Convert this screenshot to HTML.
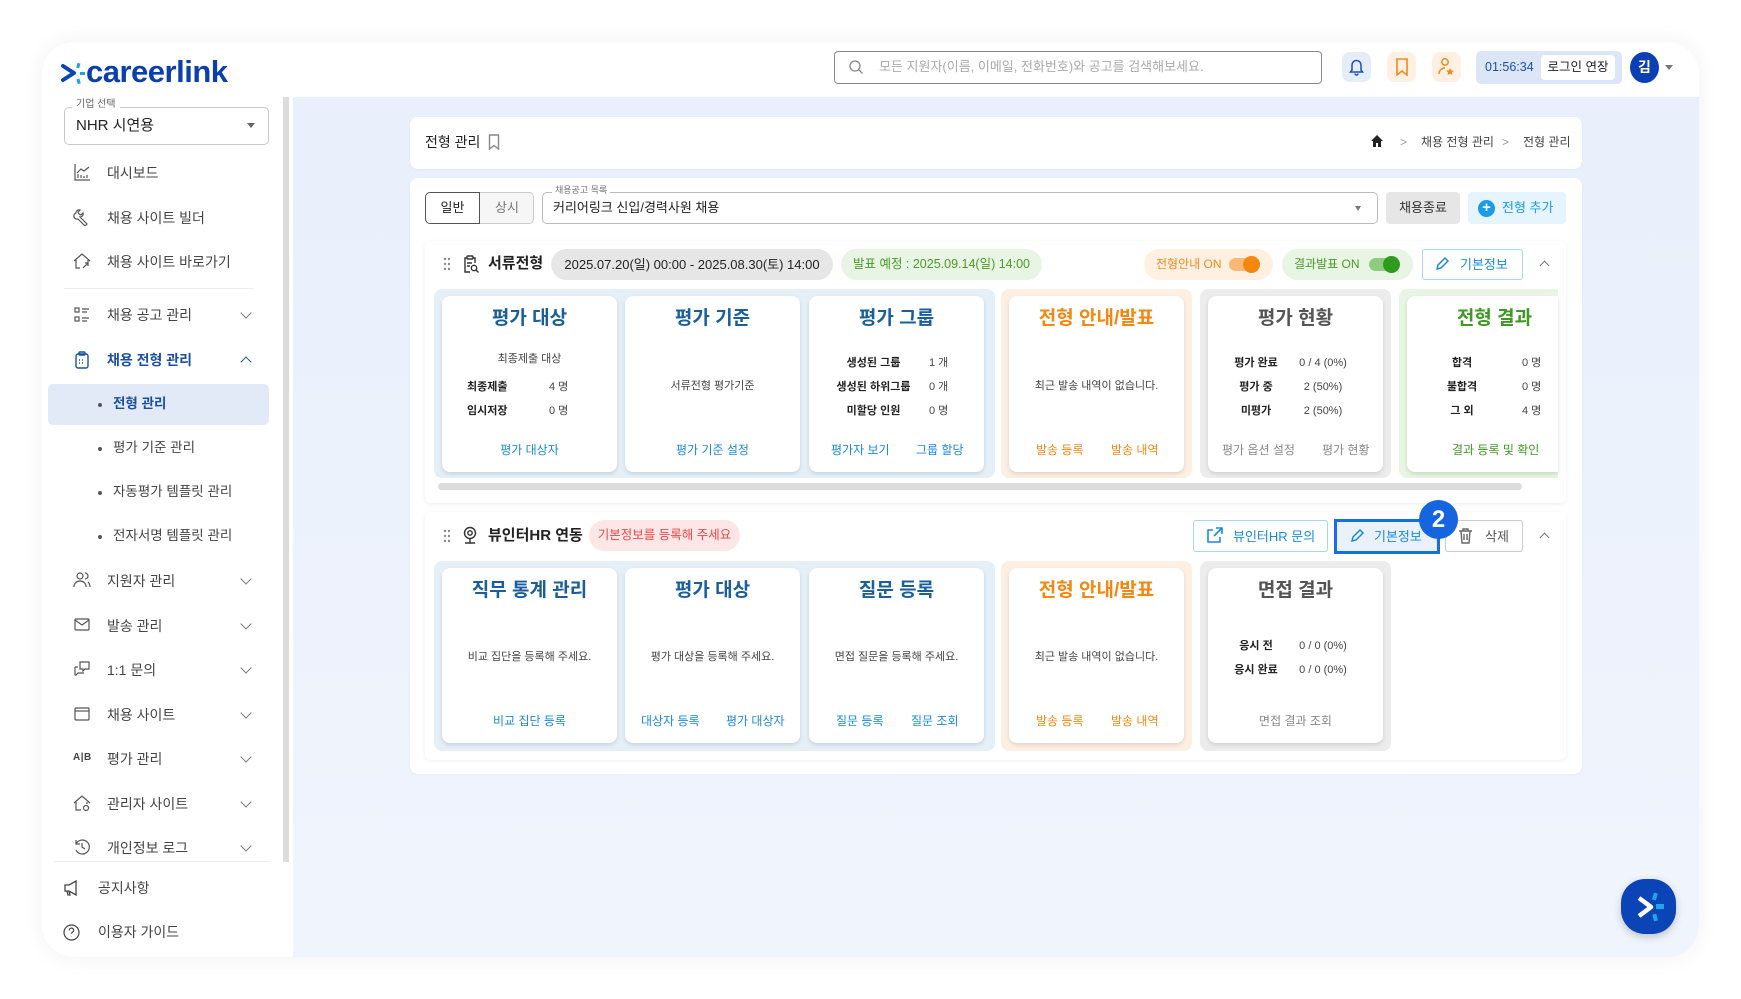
<!DOCTYPE html>
<html><head><meta charset="utf-8"><style>
*{margin:0;padding:0;box-sizing:border-box}
body{width:1741px;height:999px;background:#fff;font-family:"Liberation Sans","Noto Sans CJK KR",sans-serif;color:#333;position:relative;overflow:hidden}
.a{position:absolute}
.t{position:absolute;white-space:nowrap}
.c{text-align:center}
.card{position:absolute;background:#fff;border-radius:8px;box-shadow:0 2px 4px rgba(0,0,0,.12)}
.grp{position:absolute;border-radius:8px}
.ttl{position:absolute;left:0;right:0;text-align:center;font-size:19px;font-weight:700;line-height:24px}
.sm{font-size:11px;line-height:16px;color:#444}
.b{font-weight:700;color:#222}
.lk{font-size:12px;line-height:16px}
.menu{position:absolute;left:107px;font-size:14px;color:#444;line-height:20px}
.chev{position:absolute;left:242px;width:8px;height:8px;border-right:1.3px solid #777;border-bottom:1.3px solid #777;transform:rotate(45deg)}
.ic{position:absolute;left:73px}
.sub{position:absolute;left:98px;font-size:13.5px;color:#444;line-height:20px}
.sub:before{content:"";position:absolute;left:0;top:9px;width:4px;height:4px;border-radius:50%;background:#555}
.sub span{margin-left:15px}
</style></head><body>
<!-- outer card -->
<div class="a" style="left:42px;top:42px;width:1657px;height:915px;border-radius:32px;background:#fff;box-shadow:0 0 24px rgba(0,0,0,.06);overflow:hidden">
 <div class="a" style="left:251px;top:55px;right:0;bottom:0;background:linear-gradient(180deg,#e9f0fb,#f0f4fd)"></div>
 <div class="a" style="left:241px;top:55px;width:6px;height:765px;background:#dcdcdc"></div>
</div>
<!-- logo -->
<svg class="a" style="left:60px;top:60px" width="28" height="28" viewBox="0 0 28 28"><path d="M3 6 L14 13 L3 20" stroke="#0a45b8" stroke-width="4" fill="none" stroke-linecap="round" stroke-linejoin="round"/><rect x="17" y="3" width="3" height="5" fill="#1aa3e8" transform="rotate(15 18 5)"/><rect x="20" y="12" width="5" height="3" fill="#1aa3e8"/><rect x="17" y="19" width="3" height="5" fill="#1aa3e8" transform="rotate(-15 18 21)"/></svg>
<div class="t" style="left:86px;top:53px;font-size:31px;font-weight:700;color:#0a3fb0;letter-spacing:-.5px;line-height:38px">careerlink</div>
<!-- header right -->
<div class="a" style="left:834px;top:51px;width:488px;height:33px;border:1px solid #8a8a8a;border-radius:4px"></div>
<svg class="a" style="left:848px;top:59px" width="16" height="16" viewBox="0 0 16 16"><circle cx="7" cy="7" r="5" stroke="#888" stroke-width="1.3" fill="none"/><path d="M11 11l3.5 3.5" stroke="#888" stroke-width="1.3"/></svg>
<div class="t" style="left:879px;top:58px;font-size:13px;color:#aaa;line-height:18px">모든 지원자(이름, 이메일, 전화번호)와 공고를 검색해보세요.</div>
<div class="a" style="left:1342px;top:52px;width:29px;height:30px;border-radius:8px;background:#e6edfa"></div>
<svg class="a" style="left:1348px;top:58px" width="17" height="18" viewBox="0 0 17 18"><path d="M4 12V7a4.5 4.5 0 019 0v5l1.5 2h-12z M7 15.5a1.5 1.5 0 003 0" stroke="#1a4fb8" stroke-width="1.5" fill="none"/></svg>
<div class="a" style="left:1387px;top:52px;width:29px;height:30px;border-radius:8px;background:#fff0e2"></div>
<svg class="a" style="left:1395px;top:58px" width="14" height="18" viewBox="0 0 14 18"><path d="M2 1h10v16l-5-4-5 4z" stroke="#f08a1c" stroke-width="1.6" fill="none"/></svg>
<div class="a" style="left:1432px;top:52px;width:29px;height:30px;border-radius:8px;background:#fff0e2"></div>
<svg class="a" style="left:1437px;top:57px" width="19" height="20" viewBox="0 0 19 20"><circle cx="8" cy="5" r="3.2" stroke="#f08a1c" stroke-width="1.5" fill="none"/><path d="M2 17c0-4 3-6 6-6" stroke="#f08a1c" stroke-width="1.5" fill="none"/><path d="M13 11l1.2 2.4 2.6.3-1.9 1.8.5 2.6-2.4-1.3-2.4 1.3.5-2.6-1.9-1.8 2.6-.3z" fill="#f08a1c"/></svg>
<div class="a" style="left:1476px;top:51px;width:146px;height:33px;border-radius:5px;background:#dce6f7"></div>
<div class="t" style="left:1485px;top:59px;font-size:12.5px;color:#1a4fb0;line-height:17px">01:56:34</div>
<div class="a" style="left:1541px;top:55px;width:74px;height:25px;border-radius:4px;background:#fff"></div>
<div class="t c" style="left:1541px;top:59px;width:74px;font-size:12.5px;color:#222;line-height:17px">로그인 연장</div>
<div class="a" style="left:1630px;top:52px;width:29px;height:31px;border-radius:50%;background:#0a40b4"></div>
<div class="t c" style="left:1630px;top:58px;width:29px;font-size:14px;color:#fff;font-weight:700;line-height:18px">김</div>
<div class="a" style="left:1665px;top:65px;border:4px solid transparent;border-top:5px solid #777"></div>
<!-- sidebar -->
<div class="a" style="left:64px;top:107px;width:205px;height:38px;border:1px solid #c8c8c8;border-radius:5px"></div>
<div class="t" style="left:72px;top:98px;padding:0 4px;background:#fff;font-size:10px;color:#666;line-height:13px">기업 선택</div>
<div class="t" style="left:76px;top:116px;font-size:15px;color:#222;line-height:20px">NHR 시연용</div>
<div class="a" style="left:247px;top:123px;border:4px solid transparent;border-top:5px solid #666"></div>
<svg class="ic" style="top:163px" width="18" height="18" viewBox="0 0 18 18" fill="none" stroke="#555" stroke-width="1.2"><path d="M2 1v16h15M5 15v-4M8 15v-3M11 15v-2M14 15v-3M4 10l4-4 3 2 5-4"/></svg>
<div class="menu" style="top:163px">대시보드</div>
<svg class="ic" style="top:208px" width="18" height="18" viewBox="0 0 18 18" fill="none" stroke="#555" stroke-width="1.2"><path d="M3 5a3 3 0 014-3l-2 2 1 2 2 1 2-2a3 3 0 01-3 4l7 7-2 2-7-7a3 3 0 01-2-6z"/></svg>
<div class="menu" style="top:208px">채용 사이트 빌더</div>
<svg class="ic" style="top:252px" width="18" height="18" viewBox="0 0 18 18" fill="none" stroke="#555" stroke-width="1.2"><path d="M1 9l8-7 8 7M3 8v8h4M15 8v3M10 16l5-5M12 11h3v3"/></svg>
<div class="menu" style="top:252px">채용 사이트 바로가기</div>
<div class="a" style="left:64px;top:288px;width:190px;height:1px;background:#eee"></div>
<svg class="ic" style="top:306px" width="18" height="18" viewBox="0 0 18 18" fill="none" stroke="#555" stroke-width="1.2"><rect x="2" y="2" width="4" height="4"/><rect x="2" y="11" width="4" height="4"/><path d="M9 3h7M9 6h5M9 12h7M9 15h5"/></svg>
<div class="menu" style="top:305px">채용 공고 관리</div><div class="chev" style="top:309px"></div>
<svg class="ic" style="top:351px" width="18" height="18" viewBox="0 0 18 18" fill="none" stroke="#1a4fa8" stroke-width="1.4"><rect x="3" y="3" width="12" height="14" rx="2"/><rect x="6" y="1" width="6" height="3" rx="1"/><path d="M6 9h1M9 9h1M12 9h0M6 12h1M9 12h1"/></svg>
<div class="menu" style="top:350px;color:#1a4fa8;font-weight:700">채용 전형 관리</div><div class="chev" style="top:358px;transform:rotate(-135deg);border-color:#1a4fa8"></div>
<div class="a" style="left:48px;top:384px;width:221px;height:41px;border-radius:5px;background:#e2eaf7"></div>
<div class="sub" style="top:394px;color:#1a4fa8;font-weight:700"><span>전형 관리</span></div>
<div class="sub" style="top:438px"><span>평가 기준 관리</span></div>
<div class="sub" style="top:482px"><span>자동평가 템플릿 관리</span></div>
<div class="sub" style="top:526px"><span>전자서명 템플릿 관리</span></div>
<svg class="ic" style="top:571px" width="18" height="18" viewBox="0 0 18 18" fill="none" stroke="#555" stroke-width="1.2"><circle cx="7" cy="5" r="3"/><path d="M1 16c0-4 3-6 6-6s6 2 6 6M12 2a3 3 0 010 6M15 11c1 1 2 3 2 5"/></svg>
<div class="menu" style="top:571px">지원자 관리</div><div class="chev" style="top:575px"></div>
<svg class="ic" style="top:616px" width="18" height="18" viewBox="0 0 18 18" fill="none" stroke="#555" stroke-width="1.2"><rect x="2" y="3" width="14" height="11" rx="1"/><path d="M2 4l7 5 7-5"/></svg>
<div class="menu" style="top:616px">발송 관리</div><div class="chev" style="top:620px"></div>
<svg class="ic" style="top:660px" width="18" height="18" viewBox="0 0 18 18" fill="none" stroke="#555" stroke-width="1.2"><path d="M7 2h9v7h-4l-2 2V9H7zM2 7h3M2 7v8h1l2-2h6"/></svg>
<div class="menu" style="top:660px">1:1 문의</div><div class="chev" style="top:664px"></div>
<svg class="ic" style="top:705px" width="18" height="18" viewBox="0 0 18 18" fill="none" stroke="#555" stroke-width="1.2"><rect x="2" y="3" width="14" height="12" rx="1"/><path d="M2 6h14"/></svg>
<div class="menu" style="top:705px">채용 사이트</div><div class="chev" style="top:709px"></div>
<div class="t" style="left:73px;top:751px;font-size:10px;color:#444;font-weight:700;line-height:14px;letter-spacing:.5px">A|B</div>
<div class="menu" style="top:749px">평가 관리</div><div class="chev" style="top:753px"></div>
<svg class="ic" style="top:794px" width="18" height="18" viewBox="0 0 18 18" fill="none" stroke="#555" stroke-width="1.2"><path d="M1 9l8-7 8 7M3 8v8h5M14 8v2"/><circle cx="13" cy="14" r="2.5"/></svg>
<div class="menu" style="top:794px">관리자 사이트</div><div class="chev" style="top:798px"></div>
<svg class="ic" style="top:838px" width="18" height="18" viewBox="0 0 18 18" fill="none" stroke="#555" stroke-width="1.2"><path d="M3 12a7 7 0 100-6M3 2v4h4M9 5v4l3 2"/></svg>
<div class="menu" style="top:838px">개인정보 로그</div><div class="chev" style="top:842px"></div>
<div class="a" style="left:54px;top:861px;width:215px;height:1px;background:#eee"></div>
<svg class="a" style="left:63px;top:880px" width="18" height="16" viewBox="0 0 18 16" fill="none" stroke="#444" stroke-width="1.3"><path d="M2 5h4l7-4v14l-7-4H2zM4 11l1 4h2l-1-4"/></svg>
<div class="menu" style="left:98px;top:878px">공지사항</div>
<svg class="a" style="left:63px;top:924px" width="17" height="17" viewBox="0 0 17 17" fill="none" stroke="#444" stroke-width="1.2"><circle cx="8.5" cy="8.5" r="7.5"/><path d="M6.3 6.5a2.2 2.2 0 114 1c-.9.6-1.8 1-1.8 2.3M8.5 12v.3"/></svg>
<div class="menu" style="left:98px;top:922px">이용자 가이드</div>

<!-- breadcrumb card -->
<div class="a" style="left:410px;top:117px;width:1172px;height:52px;background:#fff;border-radius:8px;box-shadow:0 1px 3px rgba(0,0,0,.04)"></div>
<div class="t" style="left:425px;top:132px;font-size:14px;color:#222;line-height:20px">전형 관리</div>
<svg class="a" style="left:488px;top:134px" width="12" height="16" viewBox="0 0 12 16"><path d="M1.5 1h9v14l-4.5-3.5L1.5 15z" stroke="#888" stroke-width="1.4" fill="none"/></svg>
<svg class="a" style="left:1370px;top:134px" width="14" height="14" viewBox="0 0 14 14"><path d="M7 1L1 7h2v6h3V9h2v4h3V7h2z" fill="#222"/></svg>
<div class="t" style="left:1400px;top:134px;font-size:12px;color:#999;line-height:16px">&gt;</div>
<div class="t" style="left:1421px;top:134px;font-size:12px;color:#444;line-height:16px">채용 전형 관리</div>
<div class="t" style="left:1502px;top:134px;font-size:12px;color:#999;line-height:16px">&gt;</div>
<div class="t" style="left:1523px;top:134px;font-size:12px;color:#444;line-height:16px">전형 관리</div>

<!-- main card -->
<div class="a" style="left:410px;top:178px;width:1172px;height:596px;background:#fff;border-radius:8px;box-shadow:0 1px 3px rgba(0,0,0,.04)"></div>
<div class="a" style="left:425px;top:192px;width:55px;height:32px;border:1px solid #555;border-radius:5px 0 0 5px;background:#fff"></div>
<div class="t c" style="left:425px;top:199px;width:55px;font-size:13px;color:#222;line-height:18px">일반</div>
<div class="a" style="left:480px;top:192px;width:54px;height:32px;border:1px solid #ccc;border-left:0;border-radius:0 5px 5px 0;background:#f6f6f6"></div>
<div class="t c" style="left:480px;top:199px;width:54px;font-size:13px;color:#777;line-height:18px">상시</div>
<div class="a" style="left:542px;top:192px;width:836px;height:32px;border:1px solid #bbb;border-radius:5px"></div>
<div class="t" style="left:552px;top:185px;padding:0 3px;background:#fff;font-size:9px;color:#777;line-height:11px">채용공고 목록</div>
<div class="t" style="left:553px;top:199px;font-size:13px;color:#222;line-height:18px">커리어링크 신입/경력사원 채용</div>
<div class="a" style="left:1355px;top:206px;border:3.5px solid transparent;border-top:5px solid #777"></div>
<div class="a" style="left:1386px;top:192px;width:74px;height:32px;border-radius:4px;background:#e6e6e6"></div>
<div class="t c" style="left:1386px;top:199px;width:74px;font-size:13px;color:#333;line-height:18px">채용종료</div>
<div class="a" style="left:1468px;top:192px;width:98px;height:32px;border-radius:4px;background:#e6f4fd"></div>
<div class="a" style="left:1478px;top:200px;width:17px;height:17px;border-radius:50%;background:#1a9be6"></div>
<div class="t c" style="left:1478px;top:199px;width:17px;font-size:15px;color:#fff;font-weight:700;line-height:18px">+</div>
<div class="t" style="left:1502px;top:199px;font-size:13px;color:#1a9be6;line-height:18px">전형 추가</div>

<!-- section 1 -->
<div class="a" style="left:425px;top:241px;width:1141px;height:262px;background:#fff;border-radius:6px;box-shadow:0 1px 4px rgba(0,0,0,.07)"></div>
<svg class="a" style="left:443px;top:257px" width="8" height="14" viewBox="0 0 8 14" fill="#888"><circle cx="2" cy="2" r="1.2"/><circle cx="6" cy="2" r="1.2"/><circle cx="2" cy="7" r="1.2"/><circle cx="6" cy="7" r="1.2"/><circle cx="2" cy="12" r="1.2"/><circle cx="6" cy="12" r="1.2"/></svg>
<svg class="a" style="left:462px;top:255px" width="18" height="19" viewBox="0 0 18 19" fill="none" stroke="#333" stroke-width="1.4"><path d="M8 17H3V3h2M11 3h2v5"/><rect x="5" y="1" width="6" height="3" rx="1"/><path d="M5 8h5M5 11h3"/><circle cx="12" cy="13" r="2.7"/><path d="M14 15l2.5 2.5"/></svg>
<div class="t" style="left:488px;top:254px;font-size:15px;font-weight:700;color:#222;line-height:20px">서류전형</div>
<div class="a" style="left:551px;top:249px;width:282px;height:31px;border-radius:16px;background:#e6e6e6"></div>
<div class="t c" style="left:551px;top:256px;width:282px;font-size:13px;color:#222;line-height:17px">2025.07.20(일) 00:00 - 2025.08.30(토) 14:00</div>
<div class="a" style="left:841px;top:249px;width:201px;height:31px;border-radius:16px;background:#e8f4e4"></div>
<div class="t c" style="left:841px;top:256px;width:201px;font-size:12.5px;color:#4a9a24;line-height:17px">발표 예정 : 2025.09.14(일) 14:00</div>
<div class="a" style="left:1144px;top:249px;width:129px;height:31px;border-radius:16px;background:#fff0e1"></div>
<div class="t" style="left:1156px;top:256px;font-size:12px;color:#f08a1c;line-height:17px">전형안내 ON</div>
<div class="a" style="left:1229px;top:258px;width:28px;height:13px;border-radius:7px;background:#f8b877"></div>
<div class="a" style="left:1243px;top:256px;width:17px;height:17px;border-radius:50%;background:#f5870f"></div>
<div class="a" style="left:1282px;top:249px;width:131px;height:31px;border-radius:16px;background:#e8f4e4"></div>
<div class="t" style="left:1294px;top:256px;font-size:12px;color:#4a9a24;line-height:17px">결과발표 ON</div>
<div class="a" style="left:1369px;top:258px;width:28px;height:13px;border-radius:7px;background:#8fcc80"></div>
<div class="a" style="left:1383px;top:256px;width:17px;height:17px;border-radius:50%;background:#2e9a1e"></div>
<div class="a" style="left:1422px;top:249px;width:101px;height:31px;border:1px solid #a9d4f3;border-radius:3px"></div>
<svg class="a" style="left:1434px;top:256px" width="16" height="16" viewBox="0 0 16 16" fill="none" stroke="#1a8ae0" stroke-width="1.5"><path d="M3 13l1-4 7-7 3 3-7 7z"/></svg>
<div class="t" style="left:1460px;top:256px;font-size:13px;color:#1a8ae0;line-height:17px">기본정보</div>
<div class="a" style="left:1541px;top:262px;width:7px;height:7px;border-left:1.3px solid #777;border-top:1.3px solid #777;transform:rotate(45deg)"></div>

<div class="grp" style="left:434px;top:289px;width:561px;height:189px;background:#e5eff8"></div>
<div class="grp" style="left:1001px;top:289px;width:191px;height:189px;background:#fdf0e3"></div>
<div class="grp" style="left:1200px;top:289px;width:191px;height:189px;background:#ececec"></div>
<div class="grp" style="left:1399px;top:289px;width:159px;height:189px;background:#e8f4e4;border-radius:8px 0 0 8px"></div>

<div class="card" style="left:442px;top:296px;width:175px;height:176px">
 <div class="ttl" style="top:11px;color:#1b5e9c">평가 대상</div>
 <div class="t c sm" style="left:0;width:175px;top:55px">최종제출 대상</div>
 <div class="t sm b" style="left:25px;top:83px">최종제출</div><div class="t sm" style="left:107px;top:83px">4 명</div>
 <div class="t sm b" style="left:25px;top:107px">임시저장</div><div class="t sm" style="left:107px;top:107px">0 명</div>
 <div class="t c lk" style="left:0;width:175px;top:146px;color:#1a8ad8">평가 대상자</div>
</div>
<div class="card" style="left:625px;top:296px;width:175px;height:176px">
 <div class="ttl" style="top:11px;color:#1b5e9c">평가 기준</div>
 <div class="t c sm" style="left:0;width:175px;top:82px">서류전형 평가기준</div>
 <div class="t c lk" style="left:0;width:175px;top:146px;color:#1a8ad8">평가 기준 설정</div>
</div>
<div class="card" style="left:809px;top:296px;width:175px;height:176px">
 <div class="ttl" style="top:11px;color:#1b5e9c">평가 그룹</div>
 <div class="t sm b" style="left:22px;width:85px;text-align:center;top:59px">생성된 그룹</div><div class="t sm" style="left:120px;top:59px">1 개</div>
 <div class="t sm b" style="left:22px;width:85px;text-align:center;top:83px">생성된 하위그룹</div><div class="t sm" style="left:120px;top:83px">0 개</div>
 <div class="t sm b" style="left:22px;width:85px;text-align:center;top:107px">미할당 인원</div><div class="t sm" style="left:120px;top:107px">0 명</div>
 <div class="t lk" style="left:22px;top:146px;color:#1a8ad8">평가자 보기</div><div class="t lk" style="left:107px;top:146px;color:#1a8ad8">그룹 할당</div>
</div>
<div class="card" style="left:1009px;top:296px;width:175px;height:176px">
 <div class="ttl" style="top:11px;color:#f5870f">전형 안내/발표</div>
 <div class="t c sm" style="left:0;width:175px;top:82px">최근 발송 내역이 없습니다.</div>
 <div class="t lk" style="left:27px;top:146px;color:#f5870f">발송 등록</div><div class="t lk" style="left:102px;top:146px;color:#f5870f">발송 내역</div>
</div>
<div class="card" style="left:1208px;top:296px;width:175px;height:176px">
 <div class="ttl" style="top:11px;color:#555">평가 현황</div>
 <div class="t sm b" style="left:18px;width:60px;text-align:center;top:59px">평가 완료</div><div class="t sm" style="left:85px;width:60px;text-align:center;top:59px">0 / 4 (0%)</div>
 <div class="t sm b" style="left:18px;width:60px;text-align:center;top:83px">평가 중</div><div class="t sm" style="left:85px;width:60px;text-align:center;top:83px">2 (50%)</div>
 <div class="t sm b" style="left:18px;width:60px;text-align:center;top:107px">미평가</div><div class="t sm" style="left:85px;width:60px;text-align:center;top:107px">2 (50%)</div>
 <div class="t lk" style="left:14px;top:146px;color:#888">평가 옵션 설정</div><div class="t lk" style="left:114px;top:146px;color:#888">평가 현황</div>
</div>
<div class="a" style="left:1407px;top:296px;width:151px;height:176px;background:#fff;border-radius:8px 0 0 8px;box-shadow:0 2px 4px rgba(0,0,0,.12)">
 <div class="t" style="left:0;width:175px;text-align:center;top:11px;font-size:19px;font-weight:700;color:#3f9a22;line-height:24px">전형 결과</div>
 <div class="t sm b" style="left:30px;width:50px;text-align:center;top:59px">합격</div><div class="t sm" style="left:115px;top:59px">0 명</div>
 <div class="t sm b" style="left:30px;width:50px;text-align:center;top:83px">불합격</div><div class="t sm" style="left:115px;top:83px">0 명</div>
 <div class="t sm b" style="left:30px;width:50px;text-align:center;top:107px">그 외</div><div class="t sm" style="left:115px;top:107px">4 명</div>
 <div class="t lk" style="left:45px;top:146px;color:#3f9a22">결과 등록 및 확인</div>
</div>
<div class="a" style="left:438px;top:483px;width:1084px;height:7px;border-radius:4px;background:#dcdcdc"></div>

<!-- section 2 -->
<div class="a" style="left:425px;top:512px;width:1141px;height:248px;background:#fff;border-radius:6px;box-shadow:0 1px 4px rgba(0,0,0,.07)"></div>
<svg class="a" style="left:443px;top:529px" width="8" height="14" viewBox="0 0 8 14" fill="#888"><circle cx="2" cy="2" r="1.2"/><circle cx="6" cy="2" r="1.2"/><circle cx="2" cy="7" r="1.2"/><circle cx="6" cy="7" r="1.2"/><circle cx="2" cy="12" r="1.2"/><circle cx="6" cy="12" r="1.2"/></svg>
<svg class="a" style="left:462px;top:526px" width="16" height="19" viewBox="0 0 16 19" fill="none" stroke="#333" stroke-width="1.4"><circle cx="8" cy="7" r="5.5"/><circle cx="8" cy="7" r="2.2"/><path d="M3 17h10M8 13v4"/></svg>
<div class="t" style="left:488px;top:526px;font-size:15px;font-weight:700;color:#222;line-height:20px">뷰인터HR 연동</div>
<div class="a" style="left:589px;top:520px;width:151px;height:31px;border-radius:16px;background:#fde6e6"></div>
<div class="t c" style="left:589px;top:527px;width:151px;font-size:12.5px;color:#e8474a;line-height:17px">기본정보를 등록해 주세요</div>
<div class="a" style="left:1193px;top:520px;width:135px;height:32px;border:1px solid #a9d4f3;border-radius:3px"></div>
<svg class="a" style="left:1206px;top:527px" width="17" height="17" viewBox="0 0 17 17" fill="none" stroke="#1a8ae0" stroke-width="1.6"><path d="M7 3H2v12h12v-5M10 1h6v6M16 1l-8 8"/></svg>
<div class="t" style="left:1233px;top:528px;font-size:13px;color:#1a8ae0;line-height:17px">뷰인터HR 문의</div>
<div class="a" style="left:1334px;top:519px;width:106px;height:35px;border:3px solid #1a6fe0;background:#e8f1fc"></div>
<svg class="a" style="left:1349px;top:528px" width="16" height="16" viewBox="0 0 16 16" fill="none" stroke="#1a8ae0" stroke-width="1.5"><path d="M3 13l1-4 7-7 3 3-7 7z"/></svg>
<div class="t" style="left:1374px;top:528px;font-size:13px;color:#1a8ae0;line-height:17px">기본정보</div>
<div class="a" style="left:1445px;top:520px;width:78px;height:32px;border:1px solid #ccc;border-radius:3px;background:#fff"></div>
<svg class="a" style="left:1458px;top:527px" width="15" height="17" viewBox="0 0 15 17" fill="none" stroke="#666" stroke-width="1.4"><path d="M1 4h13M5 4V2h5v2M3 4l1 12h7l1-12M6 7v6M9 7v6"/></svg>
<div class="t" style="left:1485px;top:528px;font-size:13px;color:#555;line-height:17px">삭제</div>
<div class="a" style="left:1419px;top:500px;width:39px;height:39px;border-radius:50%;background:#1565e0"></div>
<div class="t c" style="left:1419px;top:506px;width:39px;font-size:24px;font-weight:700;color:#fff;line-height:27px">2</div>
<div class="a" style="left:1541px;top:534px;width:7px;height:7px;border-left:1.3px solid #777;border-top:1.3px solid #777;transform:rotate(45deg)"></div>

<div class="grp" style="left:434px;top:561px;width:561px;height:190px;background:#e5eff8"></div>
<div class="grp" style="left:1001px;top:561px;width:191px;height:190px;background:#fdf0e3"></div>
<div class="grp" style="left:1200px;top:561px;width:191px;height:190px;background:#ececec"></div>

<div class="card" style="left:442px;top:568px;width:175px;height:175px">
 <div class="ttl" style="top:11px;color:#1b5e9c">직무 통계 관리</div>
 <div class="t c sm" style="left:0;width:175px;top:81px">비교 집단을 등록해 주세요.</div>
 <div class="t c lk" style="left:0;width:175px;top:145px;color:#1a8ad8">비교 집단 등록</div>
</div>
<div class="card" style="left:625px;top:568px;width:175px;height:175px">
 <div class="ttl" style="top:11px;color:#1b5e9c">평가 대상</div>
 <div class="t c sm" style="left:0;width:175px;top:81px">평가 대상을 등록해 주세요.</div>
 <div class="t lk" style="left:16px;top:145px;color:#1a8ad8">대상자 등록</div><div class="t lk" style="left:101px;top:145px;color:#1a8ad8">평가 대상자</div>
</div>
<div class="card" style="left:809px;top:568px;width:175px;height:175px">
 <div class="ttl" style="top:11px;color:#1b5e9c">질문 등록</div>
 <div class="t c sm" style="left:0;width:175px;top:81px">면접 질문을 등록해 주세요.</div>
 <div class="t lk" style="left:27px;top:145px;color:#1a8ad8">질문 등록</div><div class="t lk" style="left:102px;top:145px;color:#1a8ad8">질문 조회</div>
</div>
<div class="card" style="left:1009px;top:568px;width:175px;height:175px">
 <div class="ttl" style="top:11px;color:#f5870f">전형 안내/발표</div>
 <div class="t c sm" style="left:0;width:175px;top:81px">최근 발송 내역이 없습니다.</div>
 <div class="t lk" style="left:27px;top:145px;color:#f5870f">발송 등록</div><div class="t lk" style="left:102px;top:145px;color:#f5870f">발송 내역</div>
</div>
<div class="card" style="left:1208px;top:568px;width:175px;height:175px">
 <div class="ttl" style="top:11px;color:#555">면접 결과</div>
 <div class="t sm b" style="left:18px;width:60px;text-align:center;top:70px">응시 전</div><div class="t sm" style="left:85px;width:60px;text-align:center;top:70px">0 / 0 (0%)</div>
 <div class="t sm b" style="left:18px;width:60px;text-align:center;top:94px">응시 완료</div><div class="t sm" style="left:85px;width:60px;text-align:center;top:94px">0 / 0 (0%)</div>
 <div class="t c lk" style="left:0;width:175px;top:145px;color:#888">면접 결과 조회</div>
</div>

<!-- float button -->
<div class="a" style="left:1621px;top:879px;width:55px;height:55px;border-radius:24px;background:#0a44b6;box-shadow:0 3px 8px rgba(0,0,0,.2)"></div>
<svg class="a" style="left:1629px;top:887px" width="40" height="40" viewBox="0 0 40 40"><path d="M10 11l12 9-12 9" stroke="#fff" stroke-width="4.5" fill="none" stroke-linejoin="round"/><rect x="24" y="6" width="4" height="7" fill="#1aa8ea" transform="rotate(15 26 9)"/><rect x="27" y="17" width="8" height="5" fill="#1aa8ea"/><rect x="24" y="27" width="4" height="7" fill="#1aa8ea" transform="rotate(-15 26 30)"/></svg>
</body></html>
